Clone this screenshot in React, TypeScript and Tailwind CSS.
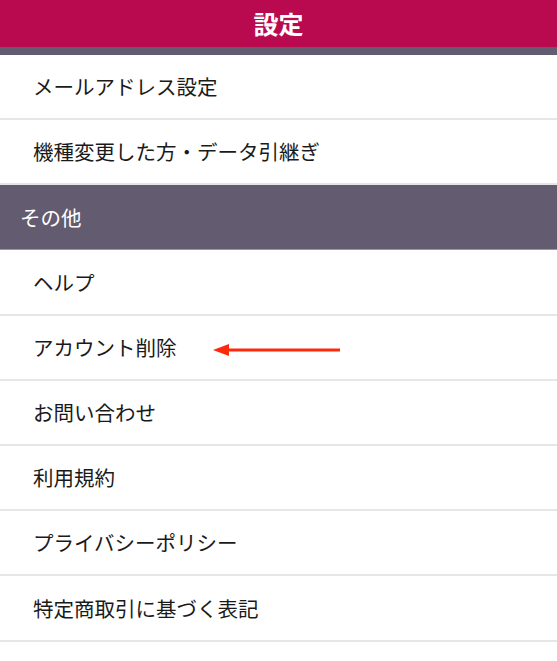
import React from 'react';

const font = { fontFamily: '"Noto Sans CJK JP", "Noto Sans", sans-serif' };

const Row: React.FC<{ label: string; children?: React.ReactNode }> = ({ label, children }) => (
    <div className="flex h-[65.2px] items-center border-b-2 border-[#e6e6e6] bg-white pl-[33px] text-[20.5px] text-[#1a1a1a]">
        <span>{label}</span>
        {children}
    </div>
);

const App: React.FC = () => {
    const top = ['メールアドレス設定', '機種変更した方・データ引継ぎ'];
    const others = ['お問い合わせ', '利用規約', 'プライバシーポリシー', '特定商取引に基づく表記'];

    return (
        <div className="min-h-[661px] w-[557px] bg-white" style={font}>
            {/* ヘッダー */}
            <div className="flex h-[47px] items-center justify-center bg-[#b90a4f] text-[25px] font-bold text-white">
                設定
            </div>
            <div className="h-[8px] bg-[#635b70]" />

            {top.map((t) => (
                <Row key={t} label={t} />
            ))}

            {/* その他 */}
            <div className="flex h-[65px] items-center border-b border-[#9c97a5] bg-[#635b70] pl-[20px] text-[20.5px] text-white">
                その他
            </div>

            <Row label="ヘルプ" />
            <Row label="アカウント削除">
                <svg className="ml-[36px] mt-[6px]" width="128" height="14" viewBox="0 0 128 14">
                    <line x1="12" y1="7" x2="127" y2="7" stroke="#fb2a0c" strokeWidth="3" />
                    <polygon points="0,7 16,1 16,13" fill="#fb2a0c" />
                </svg>
            </Row>
            {others.map((t) => (
                <Row key={t} label={t} />
            ))}
        </div>
    );
};

export default App;
